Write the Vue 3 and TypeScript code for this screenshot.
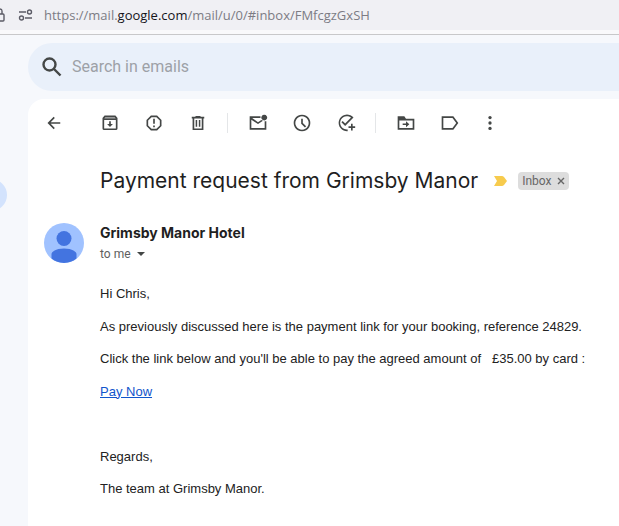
<script setup lang="ts">
interface ToolIcon {
  name: string
  path: string
  band?: boolean
}

const mailActions: ToolIcon[][] = [
  [
    { name: 'Archive', band: true, path: 'M5.500 3h13l2.500 3v12.500q0 2-2 2H5q-2 0-2-2V6zM5 8.500v10h14v-10zM6.300 5L5.200 6.500h13.600L17.700 5zM11 10h2v3.300h2.500L12 16.800l-3.500-3.500H11z' },
    { name: 'Report spam', path: 'M8.300 3h7.400l5.300 5.300v7.400L15.700 21H8.300L3 15.700V8.300zM9.100 5L5 9.100v5.800L9.100 19h5.800l4.100-4.100V9.100L14.900 5zM11 7h2v6h-2zM11 15h2v2h-2z' },
    { name: 'Delete', path: 'M9 3.500h6v1h4.500v2h-1v14h-13v-14h-1v-2H9zM7.500 6.500v12h9v-12zM9.200 8.500h1.800v8H9.200zM13 8.500h1.800v8H13z' },
  ],
  [
    { name: 'Mark as unread', path: 'M2 4h13v2H5l7 5 4-2.700 2 1L12 13.200 4 8v10h16v-8h2v10H2zM19.500 2a3.500 3.500 0 1 0 .01 0z' },
    { name: 'Snooze', path: 'M12 2a10 10 0 1 0 .01 0zM12 4a8 8 0 1 1-.01 0zM11 7h2v5l4 4-1.500 1.500L11 13z' },
    { name: 'Add to tasks', path: 'M21 5.500L11 15.600 6.500 11 8 9.500l3 3 7-7A8 8 0 1 0 14 19.700v2.100A10 10 0 1 1 19.400 4zM18 13h2v3h3v2h-3v3h-2v-3h-3v-2h3z' },
  ],
  [
    { name: 'Move to', path: 'M2 4h8l2 3h10v13H2zM4 9v9h16V9zM12 10l4 3.500-4 3.500v-2.500H8v-2h4z' },
    { name: 'Labels', path: 'M2 4h14l6 8-6 8H2zM4 6v12h11l4.500-6L15 6z' },
  ],
]
</script>

<template>
  <div class="page">
    <header class="browser">
      <svg class="lock" viewBox="0 0 5 16" aria-hidden="true">
        <path d="M-4 7h7q1 0 1 1v5q0 1-1 1h-7M2 7V4q0-2-3-2" />
      </svg>
      <svg class="permissions" viewBox="0 0 16 12" aria-hidden="true">
        <path d="M1 3h7M7 9h7" />
        <circle cx="11.5" cy="3" r="2" />
        <circle cx="3.500" cy="9" r="2" />
      </svg>
      <span class="url">https://mail.<b>google.com</b>/mail/u/0/#inbox/FMfcgzGxSH</span>
    </header>

    <div class="app">
      <aside class="rail"><span class="rail-pill"></span></aside>
      <div class="content">
        <form class="search" @submit.prevent>
          <svg class="search-icon" viewBox="0 0 24 24" aria-hidden="true">
            <circle cx="9.500" cy="9.500" r="6" />
            <path d="M14 14l6.500 6.500" />
          </svg>
          <input type="search" aria-label="Search in emails" placeholder="Search in emails" />
        </form>

        <main class="card">
          <div class="toolbar">
            <button type="button" class="tool" aria-label="Back">
              <svg viewBox="0 0 24 24"><path d="M19.500 11H8l5-5-1.400-1.400L4.200 12l7.400 7.400L13 18l-5-5h11.500z" /></svg>
            </button>
            <div v-for="(group, i) in mailActions" :key="i" class="group">
              <button v-for="icon in group" :key="icon.name" type="button" class="tool" :aria-label="icon.name">
                <svg viewBox="0 0 24 24">
                  <path v-if="icon.band" class="band" d="M5 5h14v3H5z" />
                  <path fill-rule="evenodd" :d="icon.path" />
                </svg>
              </button>
            </div>
            <button type="button" class="tool more" aria-label="More">
              <svg viewBox="0 0 24 24">
                <circle cx="12" cy="5.500" r="2" />
                <circle cx="12" cy="12" r="2" />
                <circle cx="12" cy="18.500" r="2" />
              </svg>
            </button>
          </div>

          <div class="subject">
            <h1>Payment request from Grimsby Manor</h1>
            <svg class="marker" viewBox="0 0 13 10" aria-hidden="true"><path d="M0 0h8q1 0 2 1l3 4-3 4q-1 1-2 1H0l3-5z" /></svg>
            <span class="chip">Inbox
              <button type="button" aria-label="Remove label Inbox">
                <svg viewBox="0 0 8 8"><path d="M1 1l6 6M7 1l-6 6" /></svg>
              </button>
            </span>
          </div>

          <div class="sender">
            <svg class="avatar" viewBox="0 0 40 40" aria-hidden="true">
              <circle cx="20" cy="20" r="20" fill="#a0c2ff" />
              <circle cx="20" cy="15.500" r="7.500" fill="#4374e0" />
              <path d="M7.500 35.600v-4.600c0-2 4-5.500 12.500-5.500s12.500 3.500 12.500 5.500v4.600a20 20 0 0 1-25 0z" fill="#4374e0" />
            </svg>
            <div class="names">
              <strong>Grimsby Manor Hotel</strong>
              <button type="button" class="recipient">to me
                <svg viewBox="0 0 8 4" aria-hidden="true"><path d="M0 0h8L4 4z" /></svg>
              </button>
            </div>
          </div>

          <article class="message">
            <p>Hi Chris,</p>
            <p>As previously discussed here is the payment link for your booking, reference 24829.</p>
            <p>Click the link below and you'll be able to pay the agreed amount of &nbsp; £35.00 by card :</p>
            <p><a href="#pay">Pay Now</a></p>
            <p>&nbsp;</p>
            <p>Regards,</p>
            <p>The team at Grimsby Manor.</p>
          </article>
        </main>
      </div>
    </div>
  </div>
</template>

<style>
body {
  background: #f6f8fc;
}
</style>

<style scoped>
.page {
  display: flex;
  flex-direction: column;
  min-height: 100vh;
  overflow: hidden;
  font-family: Roboto, "Liberation Sans", sans-serif;
  color: #1f1f1f;
}
button {
  padding: 0;
  border: 0;
  background: none;
  font: inherit;
  color: inherit;
}
svg {
  display: block;
  flex: none;
}
.browser {
  display: flex;
  align-items: center;
  height: 30px;
  background: #f0f0f4;
  border-bottom: 4px solid #f9f9fb;
}
.lock {
  width: 5px;
  height: 16px;
}
.permissions {
  width: 16px;
  height: 12px;
  margin: 0 10px 0 13px;
}
.lock,
.permissions {
  fill: none;
  stroke: #5b5b66;
  stroke-width: 1.4;
}
.url {
  font: 13px/30px "Open Sans", sans-serif;
  color: #7c7c84;
  white-space: nowrap;
}
.url b {
  font-weight: 400;
  color: #15141a;
}
.app {
  display: flex;
  flex: 1;
  border-top: 1px solid #c8c8ca;
}
.rail {
  display: flex;
  flex: none;
  align-items: flex-start;
  width: 28px;
  padding-top: 144px;
}
.rail-pill {
  flex: none;
  width: 56px;
  height: 32px;
  margin-left: -49px;
  border-radius: 16px;
  background: #d3e3fd;
}
.content {
  display: flex;
  flex: 1;
  flex-direction: column;
  gap: 8px;
  min-width: 0;
  padding-top: 8px;
}
.search {
  display: flex;
  align-items: center;
  gap: 8px;
  height: 48px;
  padding-left: 12px;
  border-radius: 24px 0 0 24px;
  background: #e9f0fa;
}
.search-icon {
  width: 24px;
  height: 24px;
  fill: none;
  stroke: #444746;
  stroke-width: 2.4;
}
.search input {
  flex: 1;
  min-width: 0;
  padding: 0;
  border: 0;
  outline: 0;
  background: none;
  font: 16px/24px Roboto, sans-serif;
  color: #1f1f1f;
}
.search input::placeholder {
  color: #9da1a7;
}
.card {
  flex: 1;
  padding: 0 16px;
  border-radius: 16px 0 0 0;
  background: #fff;
}
.toolbar {
  display: flex;
  align-items: center;
  height: 48px;
}
.group {
  display: flex;
  align-items: center;
  gap: 24px;
  height: 20px;
  padding-left: 20px;
  margin-left: 19px;
  border-left: 1px solid #e4e6e8;
}
.tool + .group {
  padding-left: 0;
  margin-left: 36px;
  border-left: 0;
}
.tool svg {
  width: 20px;
  height: 20px;
  fill: #444746;
}
.tool .band {
  fill: #a9abab;
}
.more {
  margin-left: 20px;
}
.subject {
  display: flex;
  align-items: center;
  height: 36px;
  padding: 16px 0 0 56px;
  white-space: nowrap;
}
h1 {
  margin: 0;
  font: 400 21px/28px Inter, sans-serif;
}
.marker {
  width: 13px;
  height: 10px;
  margin: 0 11px 0 16px;
  fill: #f7cb4d;
}
.chip {
  display: flex;
  align-items: center;
  gap: 5px;
  height: 18px;
  padding: 0 4px;
  border-radius: 4px;
  background: #ddd;
  font-size: 12px;
  color: #666;
}
.chip svg {
  width: 8px;
  height: 8px;
  stroke: #666;
  stroke-width: 1.4;
}
.sender {
  display: flex;
  gap: 16px;
  padding-top: 24px;
}
.avatar {
  width: 40px;
  height: 40px;
}
.names {
  display: flex;
  flex-direction: column;
  align-items: flex-start;
}
.names strong {
  font: 700 14px/20px Inter, sans-serif;
}
.recipient {
  display: flex;
  align-items: center;
  gap: 6px;
  font-size: 12px;
  line-height: 22px;
  color: #5e5e5e;
}
.recipient svg {
  width: 8px;
  height: 4px;
  fill: #444746;
}
.message {
  padding: 19px 0 0 56px;
  font: 13px/1.5 "Liberation Sans", Arial, sans-serif;
  color: #222;
}
.message p {
  margin: 0 0 13px;
}
.message a {
  color: #15c;
}
</style>
